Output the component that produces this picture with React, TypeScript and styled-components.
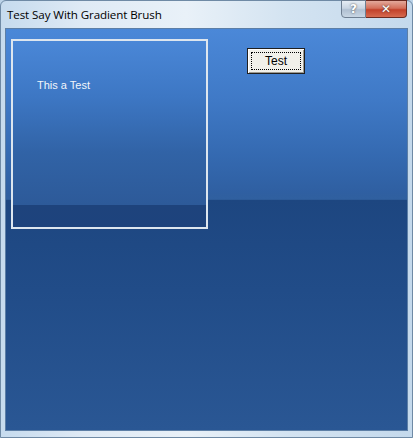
import React from "react";
import styled, { createGlobalStyle } from "styled-components";

const Global = createGlobalStyle`
  html, body { margin: 0; padding: 0; width: 413px; height: 438px; overflow: hidden; background: #bcd3e8; }
  #root { width: 413px; height: 438px; }
`;

const Window = styled.div`
  width: 413px;
  height: 438px;
  box-sizing: border-box;
  display: flex;
  flex-direction: column;
  background: linear-gradient(90deg, #c6dbee 0%, #dfeaf5 20%, #e9f1f8 45%, #d3e3f1 70%, #c4d9ec 100%);
  border: 1px solid #6f8aa5;
  border-radius: 6px 6px 0 0;
  font-family: "Open Sans", "Liberation Sans", sans-serif;
`;

const TitleBar = styled.div`
  height: 27px;
  flex: none;
  display: flex;
  align-items: flex-start;
  justify-content: space-between;
  padding-left: 6px;
`;

const Title = styled.span`
  font-size: 11.6px;
  line-height: 12px;
  margin-top: 8px;
  color: #000;
  letter-spacing: -0.1px;
`;

const Caps = styled.div`
  display: flex;
  margin-right: 5px;
  margin-top: -1px;
`;

const CapBtn = styled.div<{ $close?: boolean }>`
  width: ${(p) => (p.$close ? 41 : 25)}px;
  height: 18px;
  box-sizing: border-box;
  border: 1px solid ${(p) => (p.$close ? "#6b2a20" : "#6e7f92")};
  border-radius: ${(p) => (p.$close ? "0 0 4px 0" : "0 0 0 4px")};
  border-left-width: ${(p) => (p.$close ? 0 : 1)}px;
  background: ${(p) =>
    p.$close
      ? "linear-gradient(180deg, #e3a99b 0%, #d4705b 45%, #c2412a 55%, #d66a4f 100%)"
      : "linear-gradient(180deg, #e6edf4 0%, #c9d5e2 45%, #b0c0d2 55%, #c8d6e4 100%)"};
  display: flex;
  align-items: center;
  justify-content: center;
  color: #fff;
  font-family: "DejaVu Sans", sans-serif;
  font-weight: bold;
  font-size: 12px;
  text-shadow: 0 0 2px #333;
`;

const ClientFrame = styled.div`
  flex: 1;
  padding: 0 4px 6px 4px;
  display: flex;
`;

const Client = styled.div`
  flex: 1;
  position: relative;
  border: 1px solid #5d7fa6;
  background: linear-gradient(
    180deg,
    #4b88d8 0%,
    #3f79c6 18%,
    #3469b0 32%,
    #2f5fa1 41%,
    #30609f 42.5%,
    #1d4680 42.6%,
    #214c88 65%,
    #2a5794 100%
  );
  display: flex;
  align-items: flex-start;
  padding: 10px 0 0 5px;
  box-sizing: border-box;
`;

const Panel = styled.div`
  width: 197px;
  height: 190px;
  box-sizing: border-box;
  border: 2px solid #dde6ef;
  background: linear-gradient(
    180deg,
    #4a87d7 0%,
    #3d77c4 30%,
    #3163a6 60%,
    #2d5a99 88%,
    #1e437c 88.2%,
    #1d437d 100%
  );
  padding: 37px 0 0 24px;
`;

const PanelText = styled.div`
  color: #f2f6fb;
  font-family: "Liberation Sans", sans-serif;
  font-size: 11px;
  line-height: 14px;
`;

const TestButton = styled.button`
  margin: 9px 0 0 39px;
  width: 58px;
  height: 26px;
  box-sizing: border-box;
  background: #f1f0ea;
  border: 1px solid #1f1f1f;
  box-shadow: inset 1px 1px 0 #fff, inset -1px -1px 0 #9d9a90;
  padding: 3px;
  font-family: "Liberation Sans", sans-serif;
  font-size: 12px;
  color: #000;
  display: flex;
`;

const Focus = styled.span`
  flex: 1;
  border: 1px dotted #000;
  display: flex;
  align-items: center;
  justify-content: center;
`;

export default function App() {
  return (
    <>
      <Global />
      <Window>
        <TitleBar>
          <Title>Test Say With Gradient Brush</Title>
          <Caps>
            <CapBtn>?</CapBtn>
            <CapBtn $close>✕</CapBtn>
          </Caps>
        </TitleBar>
        <ClientFrame>
          <Client>
            <Panel>
              <PanelText>This a Test</PanelText>
            </Panel>
            <TestButton>
              <Focus>Test</Focus>
            </TestButton>
          </Client>
        </ClientFrame>
      </Window>
    </>
  );
}
